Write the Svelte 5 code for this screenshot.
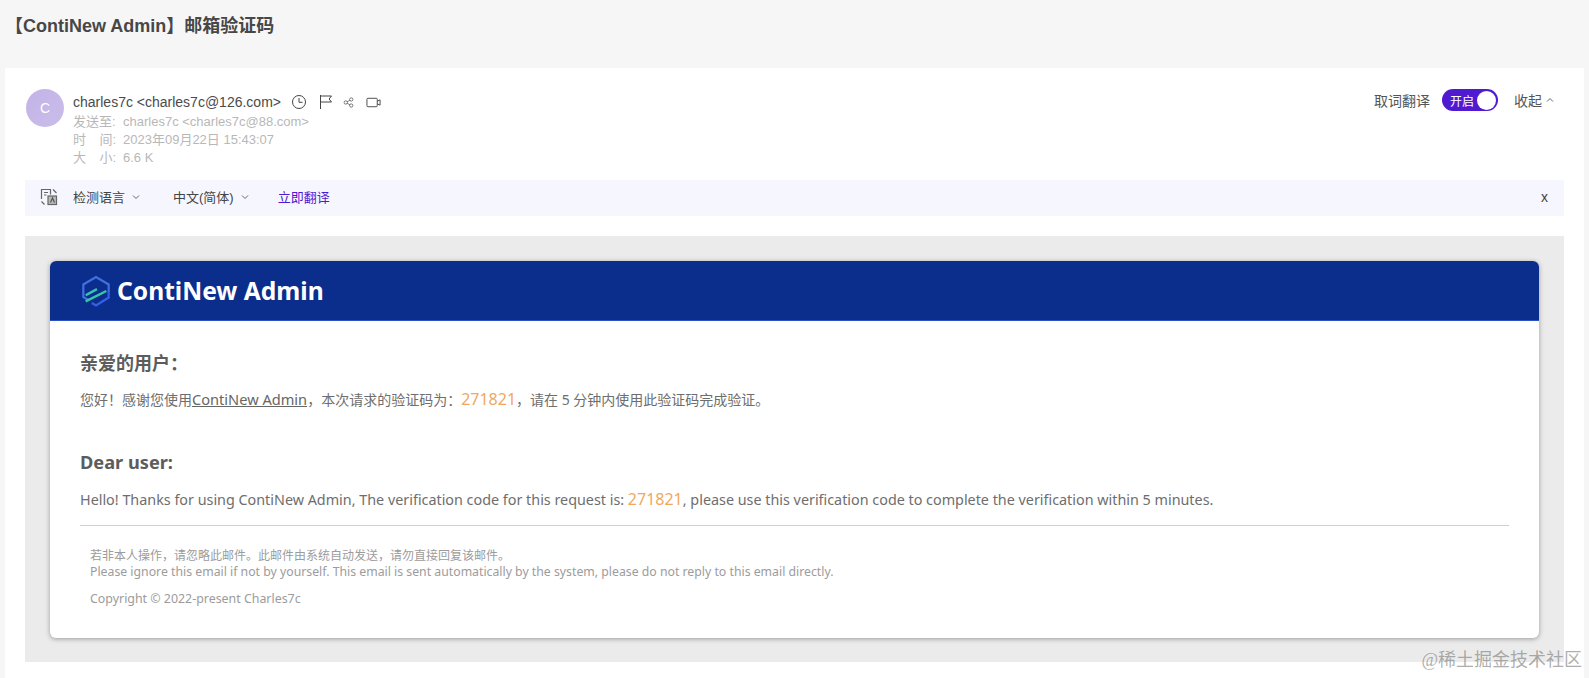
<script>
  const code = '271821';
</script>

<div class="page">
  <h1 class="subject">【ContiNew Admin】邮箱验证码</h1>
  <main class="sheet">
    <section class="head">
      <div class="avatar">C</div>
      <div class="meta">
        <div class="from">
          <span>charles7c &lt;charles7c@126.com&gt;</span>
          <svg class="ic clock" viewBox="0 0 16 16"><circle cx="8" cy="8" r="6.5"/><path d="M8 4v4.3h3.6"/></svg>
          <svg class="ic flag" viewBox="0 0 16 16"><path d="M2.5 1v14M2.5 2h11l-2.4 3 2.4 3h-11"/></svg>
          <svg class="ic share" viewBox="0 0 16 16"><circle cx="4" cy="8" r="2.4"/><circle cx="12" cy="3.6" r="2.4"/><circle cx="12" cy="12.4" r="2.4"/><path d="M6 6.9l4-2.2M6 9.1l4 2.2"/></svg>
          <svg class="ic video" viewBox="0 0 16 16"><rect x="1" y="3.5" width="11" height="9" rx="1"/><path d="M12 6.5l3-1.3v5.6l-3-1.3"/></svg>
        </div>
        <div class="row"><span class="k">发送至:</span>charles7c &lt;charles7c@88.com&gt;</div>
        <div class="row"><span class="k just"><i>时</i><i>间:</i></span>2023年09月22日 15:43:07</div>
        <div class="row"><span class="k just"><i>大</i><i>小:</i></span>6.6 K</div>
      </div>
      <div class="tools">
        <span>取词翻译</span>
        <span class="switch"><b>开启</b><em></em></span>
        <span class="fold">收起<svg viewBox="0 0 10 10"><path d="M2 6.5l3-3 3 3"/></svg></span>
      </div>
    </section>

    <section class="bar">
      <svg class="trans" viewBox="0 0 18 18">
        <path d="M1.5 11V1.5h9v5M4 4.5h4M4 7h2.5"/>
        <rect x="8" y="8" width="8.5" height="8.5" fill="#bbb"/>
        <path d="M10.5 14.5l2-4.5 2 4.5" stroke="#555"/>
        <path d="M1.5 13.5l3 3M13 1.5l3.5 3.5"/>
      </svg>
      <span class="sel">检测语言<svg viewBox="0 0 10 10"><path d="M2 3.5l3 3 3-3"/></svg></span>
      <span class="sel second">中文(简体)<svg viewBox="0 0 10 10"><path d="M2 3.5l3 3 3-3"/></svg></span>
      <a class="go" href="#go">立即翻译</a>
      <span class="close">x</span>
    </section>

    <section class="frame">
      <article class="mail">
        <header class="brand">
          <svg class="logo" viewBox="0 0 32 36" fill="none">
            <path d="M8.5 28L2.5 24.5V11L16 3l13.5 8v8" stroke="#3f6fe0" stroke-width="2.4"/>
            <path d="M29.5 19v6L16 33.5l-4.5-2.7" stroke="#3560e6" stroke-width="2.4"/>
            <path d="M5 22.5L17 16" stroke="#36c5b0" stroke-width="2.6"/>
            <path d="M5 29l22-11" stroke="#35c8a8" stroke-width="2.6"/>
          </svg>
          <span>ContiNew Admin</span>
        </header>
        <div class="body">
          <h2 class="zh-h">亲爱的用户：</h2>
          <p class="zh-p">您好！感谢您使用<a href="#c">ContiNew Admin</a>，本次请求的验证码为：<span class="code">{code}</span>，请在 5 分钟内使用此验证码完成验证。</p>
          <h2 class="en-h">Dear user:</h2>
          <p class="en-p">Hello! Thanks for using ContiNew Admin, The verification code for this request is: <span class="code">{code}</span>, please use this verification code to complete the verification within 5 minutes.</p>
          <hr />
          <div class="foot">
            <p>若非本人操作，请忽略此邮件。此邮件由系统自动发送，请勿直接回复该邮件。<br /><span class="en">Please ignore this email if not by yourself. This email is sent automatically by the system, please do not reply to this email directly.</span></p>
            <p class="copy"><span class="en cr">Copyright © 2022-present Charles7c</span></p>
          </div>
        </div>
      </article>
    </section>
  </main>
  <div class="mark">@稀土掘金技术社区</div>
</div>

<style>
  :global(body) { margin: 0; background: #f6f6f6; }
  .page { position: relative; height: 678px; overflow: hidden; font-family: "Liberation Sans", "Noto Sans CJK SC", sans-serif; background: #f6f6f6; }
  .subject { margin: 0; height: 68px; padding: 14px 0 0 5px; box-sizing: border-box; font-size: 18px; line-height: 24px; font-weight: 700; color: #474747; }
  .sheet { margin: 0 5px; height: 610px; background: #fff; padding: 0 20px; box-sizing: border-box; }
  .head { display: flex; height: 112px; padding: 0; box-sizing: border-box; position: relative; }
  .avatar { width: 38px; height: 38px; margin: 21px 9px 0 1px; border-radius: 50%; background: linear-gradient(135deg, #c3b3e6, #c9bdeb); color: #fff; font-size: 14px; line-height: 38px; text-align: center; flex: none; }
  .meta { padding-top: 23px; flex: 1; font-size: 13px; color: #b8b8b8; }
  .from { display: flex; align-items: center; height: 22px; font-size: 14px; color: #4a4a4a; }
  .row { height: 18px; line-height: 18px; display: flex; }
  .k { width: 50px; flex: none; }
  .just { display: flex; width: 43px; margin-right: 7px; justify-content: space-between; }
  .just i { font-style: normal; }
  .ic { width: 16px; height: 16px; fill: none; stroke: #444; stroke-width: 1; flex: none; }
  .clock { margin-left: 10px; }
  .flag { margin-left: 11px; }
  .share { margin-left: 9px; width: 11px; height: 11px; }
  .video { margin-left: 12px; width: 15px; height: 15px; }
  .tools { display: flex; align-items: center; height: 24px; margin-top: 20px; font-size: 14px; color: #555; padding-right: 9px; }
  .switch { display: flex; align-items: center; justify-content: space-between; width: 56px; height: 22px; margin: 0 16px 0 12px; border-radius: 11px; background: #4f1ad0; box-sizing: border-box; padding: 0 2px 0 8px; }
  .switch b { font-weight: 400; font-size: 12px; color: #fff; }
  .switch em { width: 19px; height: 19px; border-radius: 50%; background: #fff; }
  .fold { display: flex; align-items: center; }
  .fold svg, .sel svg { width: 10px; height: 10px; fill: none; stroke: #666; stroke-width: 1; margin-left: 3px; }
  .bar { display: flex; align-items: center; height: 36px; padding-bottom: 3px; box-sizing: border-box; background: #f6f7fe; font-size: 13px; color: #444; }
  .trans { width: 18px; height: 18px; margin-left: 15px; margin-right: 15px; fill: none; stroke: #666; stroke-width: 1.2; flex: none; }
  .sel svg { margin-left: 6px; }
  .second { margin-left: 32px; }
  .go { margin-left: 28px; color: #4f1ad0; text-decoration: none; }
  .close { margin-left: auto; margin-right: 16px; font-size: 14px; }
  .frame { margin-top: 20px; height: 426px; background: #ebebeb; padding: 25px 25px 0 25px; box-sizing: border-box; }
  .mail { height: 377px; background: #fff; border-radius: 6px; box-shadow: 0 1px 5px rgba(0,0,0,.35); font-family: "Noto Sans", "Noto Sans CJK SC", sans-serif; color: #6e6e6e; }
  .brand { display: flex; align-items: center; height: 60px; box-sizing: border-box; background: #0b2d8b; border-bottom: 1px solid #2a52c4; border-radius: 6px 6px 0 0; padding-left: 31px; color: #fff; font-size: 24.6px; font-weight: 700; }
  .logo { width: 30px; height: 34px; margin-right: 6px; }
  .body { padding: 0 30px; }
  .zh-h { margin: 0; padding-top: 30px; font-size: 18px; line-height: 24px; color: #5c5c5c; font-weight: 700; }
  .zh-p { margin: 12px 0 0; font-size: 14px; line-height: 24px; }
  .zh-p a { color: #666; font-size: 14.6px; }
  .code { color: #f0a860; font-size: 16px; }
  .en-h { margin: 36px 0 0; font-size: 18.2px; line-height: 28px; font-weight: 700; color: #5c5c5c; }
  .en-p { margin: 11px 0 0; font-size: 14.35px; line-height: 24px; }
  hr { border: 0; border-top: 1px solid #d0d0d0; margin: 13px 0 0; }
  .foot { padding: 0 0 0 10px; color: #9c9c9c; font-size: 12px; line-height: 16px; }
  .foot .en { font-size: 12.28px; }
  .foot .cr { font-size: 12.4px; }
  .foot p { margin: 22px 0 0; }
  .foot .copy { margin-top: 11px; }
  .mark { position: absolute; right: 7px; bottom: 7px; font-family: "Liberation Serif", "Noto Sans CJK SC", serif; font-size: 18px; color: rgba(120,120,120,.6); }
</style>
